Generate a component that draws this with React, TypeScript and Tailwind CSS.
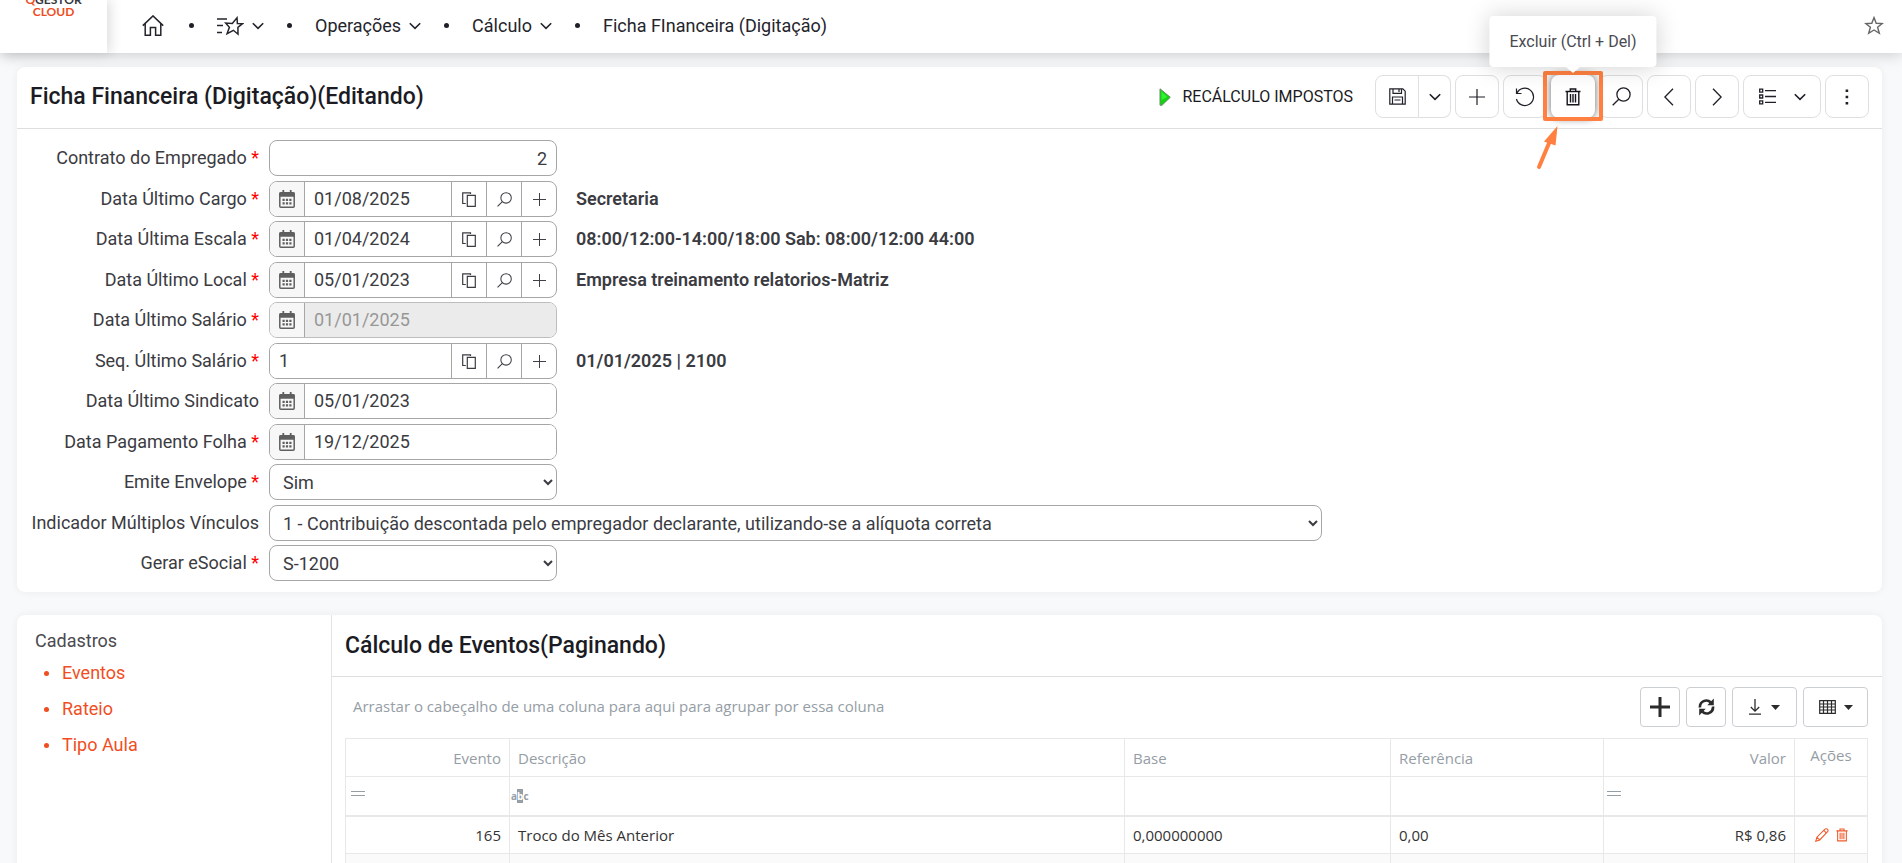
import React, { useState } from 'react';

interface IconProps {
  className?: string;
}

interface ToolButtonProps {
  label: string;
  className?: string;
  children: React.ReactNode;
}

interface FieldProps {
  id: string;
  label: string;
  required?: boolean;
  info?: string;
  children: React.ReactNode;
}

interface LookupFieldProps {
  id: string;
  label: string;
  value: string;
  required?: boolean;
  calendar?: boolean;
  lookup?: boolean;
  disabled?: boolean;
  info?: string;
}

interface EventRow {
  evento: string;
  descricao: string;
  base: string;
  referencia: string;
  valor: string;
}

const eventRows: EventRow[] = [
  { evento: '165', descricao: 'Troco do Mês Anterior', base: '0,000000000', referencia: '0,00', valor: 'R$ 0,86' },
];

const sidebarLinks = ['Eventos', 'Rateio', 'Tipo Aula'];

/* ---------- icons ---------- */

const HomeIcon: React.FC<IconProps> = ({ className }) => (
  <svg viewBox="0 0 22 21" className={className} fill="none" stroke="currentColor" strokeWidth="1.5">
    <path d="M.8 10.6 11 .9l10.2 9.7M3.2 8.8v11.4h5.2v-7.6h5.2v7.6h5.2V8.8" />
  </svg>
);

const StarIcon: React.FC<IconProps> = ({ className }) => (
  <svg viewBox="0 0 20 19" className={className} fill="none" stroke="currentColor" strokeWidth="1.4">
    <path d="m10 1.6 2.2 5.6 6.1.3-4.7 3.8 1.7 6L10 14l-5.3 3.3 1.7-6-4.7-3.8 6.1-.3z" />
  </svg>
);

const FavoritesIcon: React.FC<IconProps> = ({ className }) => (
  <svg viewBox="0 0 27 20" className={className} fill="none" stroke="currentColor" strokeWidth="1.5">
    <path d="M0 3h10M0 9.600h6M0 16.500h5" />
    <path d="m20 1.800.4 5.700 5.200.2-4.700 3.700.1 6.800-4.600-3.900-6.300 3.300 2.300-6.300-3.700-4.300 6.600.4z" />
  </svg>
);

const ChevronDown: React.FC<IconProps> = ({ className }) => (
  <svg viewBox="0 0 12 8" className={className} fill="none" stroke="currentColor" strokeWidth="1.6">
    <path d="m.8 1.2 5.2 5.2 5.2-5.2" />
  </svg>
);

const PlayIcon: React.FC<IconProps> = ({ className }) => (
  <svg viewBox="0 0 12 18" className={className}>
    <path d="M1 .8 11.300 9.300 3 17.200H1z" fill="#10d410" stroke="#6a8a6a" strokeWidth="1" />
    <path d="M2.500 3.500 8.500 9l-6 3z" fill="#2ef52e" />
  </svg>
);

const SaveIcon: React.FC<IconProps> = ({ className }) => (
  <svg viewBox="0 0 17 17" className={className} fill="none" stroke="currentColor" strokeWidth="1.2">
    <path d="M.8.8h13l2.400 2.400v13H.8zM4 .8v4.500h8.500V.8M3.500 16V9h10v7M5.500 12h6M10 1.500V4" />
  </svg>
);

const PlusIcon: React.FC<IconProps> = ({ className }) => (
  <svg viewBox="0 0 16 16" className={className} fill="none" stroke="currentColor" strokeWidth="1.200">
    <path d="M8 0v16M0 8h16" />
  </svg>
);

const UndoIcon: React.FC<IconProps> = ({ className }) => (
  <svg viewBox="0 0 20 20" className={className} fill="none" stroke="currentColor" strokeWidth="1.2">
    <path d="M1.500 1.500v5h5M1.900 6.300a8.700 8.700 0 1 1-.5 5.700" />
  </svg>
);

const TrashIcon: React.FC<IconProps> = ({ className }) => (
  <svg viewBox="0 0 16 18" className={className} fill="none" stroke="currentColor" strokeWidth="1.4">
    <path d="M.5 3.500h15M5.300 3V1h5.400v2M2.200 3.500v13.300h11.600V3.500M5.500 6v8.500M8 6v8.500M10.500 6v8.500" />
  </svg>
);

const SearchIcon: React.FC<IconProps> = ({ className }) => (
  <svg viewBox="0 0 19 19" className={className} fill="none" stroke="currentColor" strokeWidth="1.3">
    <circle cx="11.500" cy="7.500" r="6.600" />
    <path d="M6.800 12.200.7 18.300" />
  </svg>
);

const PrevIcon: React.FC<IconProps> = ({ className }) => (
  <svg viewBox="0 0 10 18" className={className} fill="none" stroke="currentColor" strokeWidth="1.3">
    <path d="M9 .8.9 9 9 17.200" />
  </svg>
);

const NextIcon: React.FC<IconProps> = ({ className }) => (
  <svg viewBox="0 0 10 18" className={className} fill="none" stroke="currentColor" strokeWidth="1.3">
    <path d="M1 .8 9.100 9 1 17.200" />
  </svg>
);

const ListIcon: React.FC<IconProps> = ({ className }) => (
  <svg viewBox="0 0 17 17" className={className} fill="none" stroke="currentColor" strokeWidth="1.3">
    <path d="M.7 1.200h3v3h-3zM.7 7h3v3h-3zM.7 12.800h3v3h-3zM6 2.700h11M6 8.500h11M6 14.300h11" />
  </svg>
);

const DotsIcon: React.FC<IconProps> = ({ className }) => (
  <svg viewBox="0 0 4 16" className={className} fill="currentColor">
    <path d="M.6.500h2.600v2.600H.6zM.6 6.700h2.600v2.600H.6zM.6 12.900h2.600v2.600H.6z" />
  </svg>
);

const CalendarIcon: React.FC<IconProps> = ({ className }) => (
  <svg viewBox="0 0 16 18" className={className}>
    <path d="M4.300 0v3M11.700 0v3" stroke="currentColor" strokeWidth="1.8" />
    <rect x=".8" y="2.800" width="14.400" height="14.400" rx="1" fill="none" stroke="currentColor" strokeWidth="1.5" />
    <path d="M.5 2.500h15v4.300H.5z" fill="currentColor" />
    <path
      d="M3.500 8.700h2.200v2.200H3.500zM6.900 8.700h2.200v2.200H6.900zM10.300 8.700h2.200v2.200h-2.200zM3.500 12.200h2.200v2.200H3.500zM6.900 12.200h2.200v2.200H6.900zM10.300 12.200h2.200v2.200h-2.200z"
      fill="currentColor"
    />
  </svg>
);

const CopyIcon: React.FC<IconProps> = ({ className }) => (
  <svg viewBox="0 0 14 15" className={className} fill="none" stroke="currentColor" strokeWidth="1.2">
    <path d="M5.300 3.300h8v11h-8zM3.800 11.500H.7V.8h7.800v1.200" />
  </svg>
);

const RefreshIcon: React.FC<IconProps> = ({ className }) => (
  <svg viewBox="0 0 17 18" className={className}>
    <path d="M2 9.500A6.300 6.300 0 0 1 12.800 4.500M15 8.500A6.300 6.300 0 0 1 4.200 13.500" fill="none" stroke="currentColor" strokeWidth="2.6" />
    <path d="M15.800.5v6.800H9.300zM1.200 17.500v-6.800h6.500z" fill="currentColor" />
  </svg>
);

const DownloadIcon: React.FC<IconProps> = ({ className }) => (
  <svg viewBox="0 0 12 16" className={className} fill="none" stroke="currentColor" strokeWidth="1.3">
    <path d="M6 0v12M1.800 8 6 12.200 10.200 8M0 15.200h12" />
  </svg>
);

const GridIcon: React.FC<IconProps> = ({ className }) => (
  <svg viewBox="0 0 17 14" className={className} fill="none" stroke="currentColor" strokeWidth="1.2">
    <path d="M.7.7h15.600v12.600H.7zM.7 4h15.600M.7 7h15.600M.7 10h15.600M4.500.7v12.600M8.500.7v12.600M12.500.7v12.600" />
  </svg>
);

const CaretIcon: React.FC<IconProps> = ({ className }) => (
  <svg viewBox="0 0 9 5" className={className} fill="currentColor">
    <path d="M0 0h9L4.500 5z" />
  </svg>
);

const EqualsIcon: React.FC<IconProps> = ({ className }) => (
  <svg viewBox="0 0 14 5" className={className} fill="none" stroke="currentColor" strokeWidth="1">
    <path d="M0 .5h14M0 4.500h14" />
  </svg>
);

const EditIcon: React.FC<IconProps> = ({ className }) => (
  <svg viewBox="0 0 14 14" className={className} fill="none" stroke="currentColor" strokeWidth="1.1">
    <path d="m.8 13.200 1.100-4L10 1.200c.7-.7 1.800-.6 2.400 0s.9 1.700.2 2.400L4.700 11.900zM8.800 2.400l2.700 2.700M2 9.300l2.600 2.500" />
  </svg>
);

/* ---------- building blocks ---------- */

const ToolButton: React.FC<ToolButtonProps> = ({ label, className = 'w-11', children }) => (
  <button
    type="button"
    aria-label={label}
    className={`flex h-[43px] items-center justify-center rounded-lg border border-[#dedfe0] bg-white text-[#1f1f27] ${className}`}
  >
    {children}
  </button>
);

const GridButton: React.FC<ToolButtonProps> = ({ label, className = 'w-10', children }) => (
  <button
    type="button"
    aria-label={label}
    className={`flex h-10 items-center justify-center rounded border border-[#cbcfd2] bg-white text-[#2b2b2b] ${className}`}
  >
    {children}
  </button>
);

const Dot = () => <span className="size-[5px] rounded-full bg-[#1f1f27]" />;

const Field: React.FC<FieldProps> = ({ id, label, required, info, children }) => (
  <div className="flex items-center odd:mb-[5px] even:mb-1">
    <label htmlFor={id} className="w-[252px] shrink-0 pr-2.5 pb-px text-right whitespace-nowrap">
      {label}
      {required && <span className="text-[#ff0000]"> *</span>}
    </label>
    {children}
    {info && <span className="ml-[19px] pb-px font-semibold">{info}</span>}
  </div>
);

const LookupField: React.FC<LookupFieldProps> = ({ id, label, value, required, calendar, lookup, disabled, info }) => {
  const [text, setText] = useState(value);

  return (
    <Field id={id} label={label} required={required} info={info}>
      <div className={`flex h-9 w-72 overflow-hidden rounded-lg border ${disabled ? 'border-[#bdbdbd]' : 'border-[#a6a6a6]'}`}>
        {calendar && (
          <button type="button" aria-label="Abrir calendário" className="flex w-[35px] shrink-0 items-center justify-center border-r border-[#a6a6a6] bg-[#f7f7f7] text-[#5f5f5f]">
            <CalendarIcon className="h-[18px] w-4" />
          </button>
        )}
        <input
          id={id}
          value={text}
          disabled={disabled}
          onChange={(e) => setText(e.target.value)}
          className="min-w-0 flex-1 bg-white px-[9px] outline-none disabled:bg-[#ebebeb] disabled:text-[#979797]"
        />
        {lookup && (
          <>
            <button type="button" aria-label="Copiar" className="flex w-[35px] items-center justify-center border-l border-[#a6a6a6]">
              <CopyIcon className="h-[15px] w-3.5" />
            </button>
            <button type="button" aria-label="Pesquisar" className="flex w-[35px] items-center justify-center border-l border-[#a6a6a6]">
              <SearchIcon className="size-[15px]" />
            </button>
            <button type="button" aria-label="Adicionar" className="flex w-[35px] items-center justify-center border-l border-[#a6a6a6]">
              <PlusIcon className="size-[13px]" />
            </button>
          </>
        )}
      </div>
    </Field>
  );
};

const TopBar = () => (
  <header className="relative z-10 flex h-[53px] shrink-0 bg-white shadow-[0_2px_14px_rgba(0,0,0,0.18)]">
    <div className="flex w-[107px] flex-col items-center overflow-hidden bg-white font-[Lato,sans-serif] text-xs leading-3 font-bold shadow-[3px_0_12px_rgba(0,0,0,0.14)]">
      <span className="-mt-1.5 text-[#35383d]">
        <span className="text-[#ee4d22]">Q</span>GESTOR
      </span>
      <span className="text-[#ee4d22]">CLOUD</span>
    </div>
    <nav className="flex flex-1 items-center gap-[23px] pr-[18px] pb-0.5 pl-[35px] text-[#24242c]">
      <a href="#" aria-label="Início" className="pr-0.5">
        <HomeIcon className="h-[21px] w-[22px]" />
      </a>
      <Dot />
      <button type="button" aria-label="Favoritos" className="flex items-center gap-2">
        <FavoritesIcon className="h-5 w-[27px]" />
        <ChevronDown className="h-2 w-3" />
      </button>
      <Dot />
      <button type="button" className="flex items-center gap-2">
        Operações <ChevronDown className="h-2 w-3" />
      </button>
      <Dot />
      <button type="button" className="flex items-center gap-2">
        Cálculo <ChevronDown className="h-2 w-3" />
      </button>
      <Dot />
      <a href="#">Ficha FInanceira (Digitação)</a>
      <button type="button" aria-label="Favoritar" className="ml-auto text-[#666]">
        <StarIcon className="h-[19px] w-5" />
      </button>
    </nav>
  </header>
);

const DeleteButton = () => (
  <div className="relative z-20">
    <button
      type="button"
      aria-label="Excluir"
      aria-describedby="tip-excluir"
      className="flex h-[43px] w-11 items-center justify-center rounded-lg bg-white text-[#14141b] shadow-[0_0_8px_rgba(0,0,0,0.6)]"
    >
      <TrashIcon className="h-[18px] w-4" />
    </button>
    <div className="pointer-events-none absolute -inset-x-2 -top-1 -bottom-[3px] rounded-xs border-4 border-[#ff8040]" />
    <div
      id="tip-excluir"
      role="tooltip"
      className="absolute bottom-[51px] left-1/2 flex h-[51px] -translate-x-1/2 items-center rounded bg-white px-5 text-base whitespace-nowrap text-[#4a4a52] shadow-[0_0_24px_rgba(0,0,0,0.18)]"
    >
      Excluir (Ctrl + Del)
    </div>
    <svg viewBox="0 0 14 6" className="absolute -top-2 left-1/2 h-1.5 w-3.5 -translate-x-1/2" fill="#fff">
      <path d="M0 0h14L7 6z" />
    </svg>
    <svg viewBox="0 0 24 46" className="absolute top-[50px] -left-4 h-[46px] w-6" fill="none">
      <path d="M4 42 14.500 17" stroke="#ff8040" strokeWidth="4" strokeLinecap="round" />
      <path d="M22.500 1 9 16.500l11.500 4z" fill="#ff8040" />
    </svg>
  </div>
);

const Toolbar = () => (
  <div className="flex items-center gap-1">
    <button type="button" className="mr-[18px] flex items-center gap-[11px] text-base text-[#1a1a22]">
      <PlayIcon className="h-[18px] w-3" />
      RECÁLCULO IMPOSTOS
    </button>
    <div className="flex">
      <ToolButton label="Salvar" className="w-11 rounded-r-none">
        <SaveIcon className="size-[17px]" />
      </ToolButton>
      <ToolButton label="Mais opções de salvar" className="w-8 rounded-l-none border-l-0">
        <ChevronDown className="h-2 w-3" />
      </ToolButton>
    </div>
    <ToolButton label="Novo">
      <PlusIcon className="size-4" />
    </ToolButton>
    <ToolButton label="Desfazer">
      <UndoIcon className="size-5" />
    </ToolButton>
    <DeleteButton />
    <ToolButton label="Pesquisar">
      <SearchIcon className="size-[19px]" />
    </ToolButton>
    <ToolButton label="Anterior">
      <PrevIcon className="h-[18px] w-2.5" />
    </ToolButton>
    <ToolButton label="Próximo">
      <NextIcon className="h-[18px] w-2.5" />
    </ToolButton>
    <ToolButton label="Listagem" className="w-[78px] gap-[18px]">
      <ListIcon className="size-[17px]" />
      <ChevronDown className="h-2 w-3" />
    </ToolButton>
    <ToolButton label="Mais">
      <DotsIcon className="h-4 w-1" />
    </ToolButton>
  </div>
);

const PayrollForm = () => (
  <form className="pt-[11px] pb-1.5 text-[#3b3b42]">
    <Field id="contrato" label="Contrato do Empregado" required>
      <input id="contrato" defaultValue="2" className="h-9 w-72 rounded-lg border border-[#a6a6a6] px-[9px] text-right" />
    </Field>
    <LookupField id="cargo" label="Data Último Cargo" value="01/08/2025" required calendar lookup info="Secretaria" />
    <LookupField id="escala" label="Data Última Escala" value="01/04/2024" required calendar lookup info="08:00/12:00-14:00/18:00 Sab: 08:00/12:00 44:00" />
    <LookupField id="local" label="Data Último Local" value="05/01/2023" required calendar lookup info="Empresa treinamento relatorios-Matriz" />
    <LookupField id="salario" label="Data Último Salário" value="01/01/2025" required calendar disabled />
    <LookupField id="seq" label="Seq. Último Salário" value="1" required lookup info="01/01/2025 | 2100" />
    <LookupField id="sindicato" label="Data Último Sindicato" value="05/01/2023" calendar />
    <LookupField id="pagamento" label="Data Pagamento Folha" value="19/12/2025" required calendar />
    <Field id="envelope" label="Emite Envelope" required>
      <select id="envelope" className="h-9 w-72 rounded-lg border border-[#a6a6a6] bg-white pl-[9px]">
        <option>Sim</option>
        <option>Não</option>
      </select>
    </Field>
    <Field id="vinculos" label="Indicador Múltiplos Vínculos">
      <select id="vinculos" className="h-9 w-[1053px] rounded-lg border border-[#a6a6a6] bg-white pl-[9px]">
        <option>1 - Contribuição descontada pelo empregador declarante, utilizando-se a alíquota correta</option>
      </select>
    </Field>
    <Field id="esocial" label="Gerar eSocial" required>
      <select id="esocial" className="h-9 w-72 rounded-lg border border-[#a6a6a6] bg-white pl-[9px]">
        <option>S-1200</option>
      </select>
    </Field>
  </form>
);

const EventsTable = () => (
  <table className="w-full table-fixed border-collapse border border-[#e8e8e8] text-[15px] text-[#333]">
    <colgroup>
      <col className="w-[164px]" />
      <col />
      <col className="w-[266px]" />
      <col className="w-[213px]" />
      <col className="w-[191px]" />
      <col className="w-[73px]" />
    </colgroup>
    <thead className="text-[#959da5]">
      <tr className="h-[38px] border-b border-[#e8e8e8] *:border-r *:border-[#e8e8e8] *:px-2 *:font-normal">
        <th className="text-right">Evento</th>
        <th className="text-left">Descrição</th>
        <th className="text-left">Base</th>
        <th className="text-left">Referência</th>
        <th className="border-r-2 text-right">Valor</th>
        <th className="pb-1.5 text-center">Ações</th>
      </tr>
      <tr className="h-[39px] border-b-2 border-[#e8e8e8] *:border-r *:border-[#e8e8e8]">
        <td className="pl-[5px]">
          <EqualsIcon className="mb-1 h-[5px] w-3.5" />
        </td>
        <td className="pl-px text-[10px] leading-3 font-bold">
          a<span className="bg-[#959da5] text-white">b</span>c
        </td>
        <td />
        <td />
        <td className="border-r-2 pl-[3px]">
          <EqualsIcon className="mb-1 h-[5px] w-3.5" />
        </td>
        <td />
      </tr>
    </thead>
    <tbody>
      {eventRows.map((row) => (
        <tr key={row.evento} className="h-[38px] border-b border-[#e8e8e8] *:border-r *:border-[#e8e8e8] *:px-2">
          <td className="text-right">{row.evento}</td>
          <td>{row.descricao}</td>
          <td>{row.base}</td>
          <td>{row.referencia}</td>
          <td className="border-r-2 text-right">{row.valor}</td>
          <td>
            <div className="flex items-center justify-center gap-[7px] text-[#f0592a]">
              <button type="button" aria-label="Editar">
                <EditIcon className="size-3.5" />
              </button>
              <button type="button" aria-label="Excluir evento">
                <TrashIcon className="h-3.5 w-3" />
              </button>
            </div>
          </td>
        </tr>
      ))}
      <tr className="h-[38px] bg-[#fafafa] *:border-r *:border-[#e8e8e8]">
        <td />
        <td />
        <td />
        <td />
        <td className="border-r-2" />
        <td />
      </tr>
    </tbody>
  </table>
);

const App: React.FC = () => {
  return (
    <div className="flex h-screen flex-col overflow-hidden bg-[#f8f9fb] font-[Roboto,sans-serif] text-lg leading-6">
      <TopBar />
      <main className="flex flex-1 flex-col gap-[23px] pt-3.5 pr-5 pl-[17px]">
        <section className="rounded-lg bg-white shadow-[0_0_8px_rgba(0,0,0,0.06)]">
          <div className="flex h-[62px] items-center justify-between border-b border-[#dedede] pr-[13px] pb-0.5 pl-[13px]">
            <h1 className="text-[23px] font-medium text-[#1b1b24]">Ficha Financeira (Digitação)(Editando)</h1>
            <div className="relative z-20">
              <Toolbar />
            </div>
          </div>
          <PayrollForm />
        </section>

        <section className="flex flex-1 rounded-t-lg bg-white shadow-[0_0_8px_rgba(0,0,0,0.06)]">
          <aside className="w-[315px] shrink-0 border-r border-[#e4e4e4] px-[18px] pt-3.5 text-[#4a4a50]">
            <h2>Cadastros</h2>
            <ul className="mt-2 flex list-none flex-col gap-3 pl-[9px] text-[#f04e1f]">
              {sidebarLinks.map((link) => (
                <li key={link} className="flex items-center gap-[13px]">
                  <span className="size-[5px] rounded-full bg-[#f04e1f]" />
                  <a href="#">{link}</a>
                </li>
              ))}
            </ul>
          </aside>
          <div className="min-w-0 flex-1">
            <div className="flex h-[62px] items-center border-b border-[#dedede] px-[13px]">
              <h2 className="text-[23px] font-medium text-[#1b1b24]">Cálculo de Eventos(Paginando)</h2>
            </div>
            <div className="pt-2.5 pr-3.5 pl-[13px] font-['Open_Sans',sans-serif]">
              <div className="mb-[11px] flex items-center justify-between pl-2">
                <span className="pb-0.5 text-[15px] text-[#959da5]">Arrastar o cabeçalho de uma coluna para aqui para agrupar por essa coluna</span>
                <div className="flex gap-1.5">
                  <GridButton label="Adicionar evento">
                    <svg viewBox="0 0 20 20" className="size-5" stroke="currentColor" strokeWidth="3">
                      <path d="M10 0v20M0 10h20" />
                    </svg>
                  </GridButton>
                  <GridButton label="Atualizar">
                    <RefreshIcon className="h-[18px] w-[17px]" />
                  </GridButton>
                  <GridButton label="Exportar" className="w-[65px] gap-2.5">
                    <DownloadIcon className="h-4 w-3" />
                    <CaretIcon className="h-[5px] w-[9px]" />
                  </GridButton>
                  <GridButton label="Colunas" className="w-[65px] gap-2">
                    <GridIcon className="h-3.5 w-[17px]" />
                    <CaretIcon className="h-[5px] w-[9px]" />
                  </GridButton>
                </div>
              </div>
              <EventsTable />
            </div>
          </div>
        </section>
      </main>
    </div>
  );
};

export default App;
